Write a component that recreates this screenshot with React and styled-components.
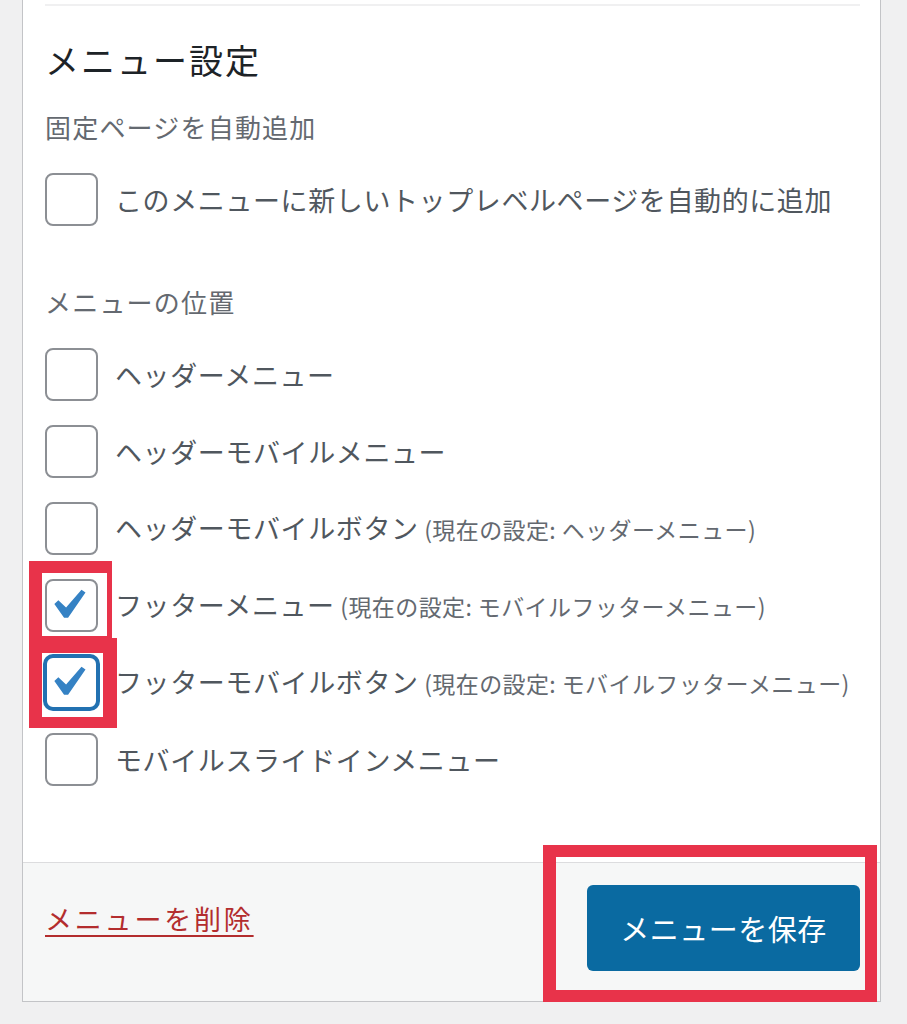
import React from 'react'
import styled, { createGlobalStyle, css } from 'styled-components';

const GlobalStyle = createGlobalStyle`
html, body {
    margin: 0;
    padding: 0;
    background: #f0f0f1;
}
body {
    font-family: "Noto Sans CJK JP", "Noto Sans", sans-serif;
}
`;

const locations = [
    { label: 'ヘッダーメニュー' },
    { label: 'ヘッダーモバイルメニュー' },
    { label: 'ヘッダーモバイルボタン', note: '(現在の設定: ヘッダーメニュー)' },
    { label: 'フッターメニュー', note: '(現在の設定: モバイルフッターメニュー)', checked: true },
    { label: 'フッターモバイルボタン', note: '(現在の設定: モバイルフッターメニュー)', checked: true, focused: true },
    { label: 'モバイルスライドインメニュー' },
];

function Check() {
    return (
        <CheckMark viewBox="0 0 20 20">
            <path d="M14.83 4.89l1.34.94-5.81 8.38H9.02L5.78 9.67l1.34-1.25 2.57 2.4z" />
        </CheckMark>
    )
}

function Option({ label, note, checked, focused }) {
    return (
        <Row>
            <Box $focused={focused}>{checked && <Check />}</Box>
            <Label>
                {label}
                {note && <Note> {note}</Note>}
            </Label>
        </Row>
    )
}

function App() {
    return (
        <Page>
            <GlobalStyle />
            <Card>
                <Body>
                    <Divider />
                    <Heading>メニュー設定</Heading>
                    <SectionLabel>固定ページを自動追加</SectionLabel>
                    <Options>
                        <Option label="このメニューに新しいトップレベルページを自動的に追加" />
                    </Options>
                    <SectionLabel $gap={60}>メニューの位置</SectionLabel>
                    <Options>
                        {locations.map((l) => (
                            <Option key={l.label} {...l} />
                        ))}
                    </Options>
                </Body>
                <Footer>
                    <DeleteLink href="#">メニューを削除</DeleteLink>
                    <SaveButton>メニューを保存</SaveButton>
                </Footer>
            </Card>
            <Mark $x={29} $y={561} $w={83} $h={77} $b="12px 5px 2px 13px" />
            <Mark $x={29} $y={638} $w={88} $h={90} $b="15px 14px 11px 13px" />
            <Mark $x={543} $y={845} $w={334} $h={157} $b="12px 12px 12px 13px" />
        </Page>
    )
}

export default App

const Page = styled.div`
position: relative;
box-sizing: border-box;
height: 1024px;
padding: 0 26px 0 22px;
overflow: hidden;
`;

const Card = styled.div`
background: #fff;
border: 1px solid #c3c4c7;
border-top: none;
`;

const Body = styled.div`
padding: 4px 20px 76px 22px;
`;

const Divider = styled.div`
height: 2px;
background: #f0f0f1;
`;

const Heading = styled.h2`
margin: 34px 0 0;
font-size: 34px;
line-height: 40px;
font-weight: 400;
letter-spacing: 2px;
color: #1d2327;
`;

const SectionLabel = styled.div`
margin-top: ${(p) => p.$gap || 31}px;
font-size: 26px;
line-height: 32px;
letter-spacing: 1.2px;
color: #646970;
`;

const Options = styled.div`
display: flex;
flex-direction: column;
gap: 24px;
margin-top: 30px;
`;

const Row = styled.div`
display: flex;
align-items: center;
gap: 17px;
`;

const Box = styled.div`
position: relative;
flex: none;
box-sizing: border-box;
width: 53px;
height: 53px;
border: 2px solid #8c8f94;
border-radius: 8px;
background: #fff;
${(p) => p.$focused && css`
    border-color: #2271b1;
    box-shadow: 0 0 0 2px #2271b1;
`}
`;

const CheckMark = styled.svg`
position: absolute;
left: -10px;
top: -6px;
width: 60px;
height: 60px;
fill: #3582c4;
`;

const Label = styled.div`
font-size: 27px;
line-height: 34px;
letter-spacing: 0.6px;
color: #50575e;
white-space: nowrap;
`;

const Note = styled.span`
font-size: 23px;
letter-spacing: 0.4px;
color: #646970;
`;

const Footer = styled.div`
display: flex;
align-items: center;
justify-content: space-between;
padding: 22px 20px 30px 22px;
background: #f6f7f7;
border-top: 1px solid #dcdcde;
`;

const DeleteLink = styled.a`
margin-bottom: 18px;
font-size: 27px;
line-height: 34px;
letter-spacing: 2.8px;
color: #b32d2e;
text-decoration: underline;
text-underline-offset: 5px;
`;

const SaveButton = styled.button`
width: 273px;
height: 86px;
border: none;
border-radius: 6px;
background: #0a6aa1;
color: #fff;
font-family: inherit;
font-size: 29px;
letter-spacing: 0.5px;
cursor: pointer;
`;

const Mark = styled.div`
position: absolute;
left: ${(p) => p.$x}px;
top: ${(p) => p.$y}px;
width: ${(p) => p.$w}px;
height: ${(p) => p.$h}px;
box-sizing: border-box;
border-style: solid;
border-color: #e8334a;
border-width: ${(p) => p.$b};
pointer-events: none;
`;
